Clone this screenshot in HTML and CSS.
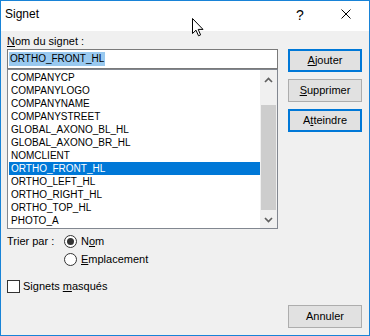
FILE: index.html
```html
<!DOCTYPE html>
<html lang="fr">
<head>
<meta charset="utf-8">
<title>Signet</title>
<link rel="stylesheet" href="styles.css">
</head>
<body>
<div class="window">
  <div class="titlebar">
    <span class="title">Signet</span>
    <span class="tb-btn help">?</span>
    <span class="tb-btn close">
      <svg width="10" height="10" viewBox="0 0 10 10"><path d="M0.5 0.5 L9.5 9.5 M9.5 0.5 L0.5 9.5" stroke="#000" stroke-width="1" fill="none"/></svg>
    </span>
  </div>
  <div class="body">
    <div class="main">
      <div class="left">
        <div class="label"><u>N</u>om du signet :</div>
        <div class="input"><span class="sel">ORTHO_FRONT_HL</span></div>
        <div class="list">
          <ul class="items">
            <li>COMPANYCP</li>
            <li>COMPANYLOGO</li>
            <li>COMPANYNAME</li>
            <li>COMPANYSTREET</li>
            <li>GLOBAL_AXONO_BL_HL</li>
            <li>GLOBAL_AXONO_BR_HL</li>
            <li>NOMCLIENT</li>
            <li class="selected">ORTHO_FRONT_HL</li>
            <li>ORTHO_LEFT_HL</li>
            <li>ORTHO_RIGHT_HL</li>
            <li>ORTHO_TOP_HL</li>
            <li>PHOTO_A</li>
          </ul>
          <div class="scrollbar">
            <div class="sb-btn up"><svg width="9" height="6" viewBox="0 0 9 6"><polyline points="1,5 4.5,1.5 8,5" fill="none" stroke="#606060" stroke-width="1.7"/></svg></div>
            <div class="sb-thumb"></div>
            <div class="sb-btn down"><svg width="9" height="6" viewBox="0 0 9 6"><polyline points="1,1 4.5,4.5 8,1" fill="none" stroke="#606060" stroke-width="1.7"/></svg></div>
          </div>
        </div>
        <div class="sort">
          <span class="sort-label">Trier par :</span>
          <div class="radios">
            <div class="opt"><span class="radio checked"></span><span>N<u>o</u>m</span></div>
            <div class="opt"><span class="radio"></span><span><u>E</u>mplacement</span></div>
          </div>
        </div>
        <div class="check-row"><span class="checkbox"></span><span>Signets <u>m</u>asqués</span></div>
      </div>
      <div class="right">
        <div class="btn default"><span><u>A</u>jouter</span></div>
        <div class="btn"><span><u>S</u>upprimer</span></div>
        <div class="btn default"><span>A<u>t</u>teindre</span></div>
      </div>
    </div>
    <div class="footer"><div class="btn"><span>Annuler</span></div></div>
  </div>
  <svg class="cursor" width="13" height="20" viewBox="0 0 13 20"><polygon points="0.5,0.5 0.5,15.5 4,12.2 6.5,17.8 8.6,16.9 6.2,11.4 11,11.4" fill="#fff" stroke="#000" stroke-width="1" stroke-linejoin="miter"/></svg>
</div>
</body>
</html>
```
FILE: styles.css
```css
html, body {
  margin: 0;
  padding: 0;
  background: #f0f0f0;
}

.window {
  position: relative;
  width: 370px;
  height: 336px;
  box-sizing: border-box;
  border: 1px solid #1883d7;
  background: #f0f0f0;
  display: flex;
  flex-direction: column;
  font-family: "Liberation Sans", Arial, sans-serif;
  font-size: 11px;
  color: #000;
}

u {
  text-decoration: underline;
  text-underline-offset: 1px;
}

.titlebar {
  height: 30px;
  flex: none;
  background: #fff;
  display: flex;
  align-items: flex-start;
}

.title {
  flex: 1;
  font-size: 12px;
  line-height: 14px;
  padding: 6px 0 0 4px;
}

.tb-btn {
  width: 46px;
  height: 26px;
  display: flex;
  align-items: center;
  justify-content: center;
}

.help {
  font-size: 14px;
  line-height: 14px;
  padding-top: 1px;
}

.body {
  flex: 1;
  display: flex;
  flex-direction: column;
  padding: 4px 7px 7px 6px;
}

.main {
  display: flex;
  gap: 10px;
}

.left {
  width: 271px;
}

.label {
  height: 13px;
  line-height: 13px;
  margin-bottom: 1px;
}

.input {
  height: 20px;
  box-sizing: border-box;
  border: 1px solid #7a7a7a;
  background: #fff;
  padding: 2px 0 0 1px;
}

.sel {
  display: inline-block;
  background: #99c9ef;
  font-size: 10px;
  line-height: 14px;
  height: 14px;
  padding: 0 1px;
}

.list {
  height: 160px;
  box-sizing: border-box;
  border: 1px solid #828790;
  background: #fff;
  display: flex;
}

.items {
  flex: 1;
  margin: 0;
  padding: 1px 0 1px 1px;
  list-style: none;
  font-size: 10px;
}

.items li {
  height: 13px;
  line-height: 13px;
  padding-left: 2px;
  white-space: nowrap;
}

.items li.selected {
  background: #0078d7;
  color: #fff;
}

.scrollbar {
  width: 17px;
  flex: none;
  background: #f0f0f0;
  display: flex;
  flex-direction: column;
}

.sb-btn {
  height: 17px;
  display: flex;
  align-items: center;
  justify-content: center;
}

.sb-btn.up {
  padding-top: 3px;
  box-sizing: border-box;
}

.sb-btn.down {
  margin-top: auto;
}

.sb-thumb {
  margin: 18px 1px 0 1px;
  height: 105px;
  background: #cdcdcd;
}

.sort {
  display: flex;
  margin-top: 3px;
}

.sort-label {
  width: 57px;
  line-height: 18px;
}

.opt {
  height: 18px;
  display: flex;
  align-items: center;
  line-height: 13px;
}

.radio {
  width: 13px;
  height: 13px;
  box-sizing: border-box;
  border: 1px solid #333;
  border-radius: 50%;
  background: #fff;
  margin-right: 4px;
  display: grid;
  place-items: center;
}

.radio.checked::after {
  content: "";
  width: 7px;
  height: 7px;
  border-radius: 50%;
  background: #333;
}

.check-row {
  margin-top: 9px;
  height: 18px;
  display: flex;
  align-items: center;
  line-height: 13px;
}

.checkbox {
  width: 13px;
  height: 13px;
  box-sizing: border-box;
  border: 1px solid #333;
  background: #fff;
  margin-right: 3px;
}

.right {
  width: 74px;
  padding-top: 14px;
  display: flex;
  flex-direction: column;
  gap: 7px;
}

.btn {
  width: 74px;
  height: 23px;
  box-sizing: border-box;
  border: 1px solid #adadad;
  background: #e1e1e1;
  display: flex;
  align-items: center;
  justify-content: center;
  line-height: 13px;
}

.btn.default {
  border: 2px solid #0078d7;
}

.footer {
  margin-top: auto;
  display: flex;
  justify-content: flex-end;
}

.cursor {
  position: absolute;
  left: 191px;
  top: 17px;
}
```
